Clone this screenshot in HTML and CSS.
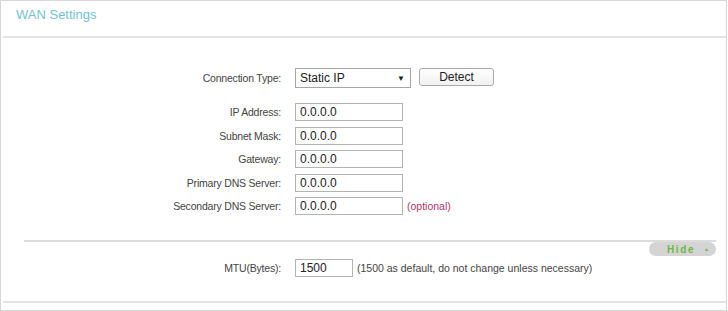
FILE: index.html
```html
<!DOCTYPE html>
<html lang="en">
<head>
    <meta charset="UTF-8">
    <title>WAN Settings</title>
    <link rel="stylesheet" href="styles.css">
</head>
<body>
    <div class="panel">
        <div class="panel-head">
            <h2>WAN Settings</h2>
        </div>

        <div class="panel-body">
            <div class="row row-type">
                <label for="conn-type">Connection Type:</label>
                <div class="field">
                    <div class="select-wrap">
                        <select id="conn-type">
                            <option>Static IP</option>
                            <option>Dynamic IP</option>
                            <option>PPPoE</option>
                        </select>
                        <span class="select-arrow">&#9660;</span>
                    </div>
                    <button class="btn-detect" type="button">Detect</button>
                </div>
            </div>

            <div class="ip-rows">
                <div class="row">
                    <label for="ip">IP Address:</label>
                    <div class="field"><input id="ip" type="text" value="0.0.0.0"></div>
                </div>
                <div class="row">
                    <label for="mask">Subnet Mask:</label>
                    <div class="field"><input id="mask" type="text" value="0.0.0.0"></div>
                </div>
                <div class="row">
                    <label for="gw">Gateway:</label>
                    <div class="field"><input id="gw" type="text" value="0.0.0.0"></div>
                </div>
                <div class="row">
                    <label for="dns1">Primary DNS Server:</label>
                    <div class="field"><input id="dns1" type="text" value="0.0.0.0"></div>
                </div>
                <div class="row">
                    <label for="dns2">Secondary DNS Server:</label>
                    <div class="field">
                        <input id="dns2" type="text" value="0.0.0.0">
                        <span class="optional">(optional)</span>
                    </div>
                </div>
            </div>

            <div class="adv-bar">
                <button class="btn-hide" type="button"><span>Hide</span><span class="hide-arrow">&#9650;</span></button>
            </div>

            <div class="row row-mtu">
                <label for="mtu">MTU(Bytes):</label>
                <div class="field">
                    <input id="mtu" class="input-short" type="text" value="1500">
                    <span class="hint">(1500 as default, do not change unless necessary)</span>
                </div>
            </div>
        </div>
    </div>
</body>
</html>
```

FILE: styles.css
```css
* {
    box-sizing: border-box;
}

body {
    margin: 0;
    font-family: "Liberation Sans", Arial, sans-serif;
    font-size: 10.5px;
    color: #444;
    background: #fff;
}

.panel {
    width: 727px;
    height: 311px;
    border: 1px solid #d6d6d6;
}

.panel-head {
    height: 37px;
    margin-left: 2px;
    border-bottom: 2px solid #e4e4e4;
}

.panel-head h2 {
    margin: 0;
    padding: 6px 0 0 13px;
    font-size: 13px;
    font-weight: normal;
    color: #72c3d2;
}

.panel-body {
    margin-left: 2px;
    padding-top: 30px;
    height: 265px;
    border-bottom: 2px solid #e4e4e4;
}

.row {
    display: grid;
    grid-template-columns: 278px auto;
    column-gap: 14px;
    align-items: center;
}

.row label {
    text-align: right;
    color: #444;
    letter-spacing: -0.2px;
}

.field {
    display: flex;
    align-items: center;
    gap: 4px;
}

.row-type {
    height: 20px;
    margin-bottom: 15px;
}

.row-type .field {
    gap: 8px;
}

.select-wrap {
    position: relative;
    width: 116px;
    height: 20px;
}

.select-wrap select {
    appearance: none;
    -webkit-appearance: none;
    width: 100%;
    height: 100%;
    padding: 0 0 0 4px;
    border: 1px solid #a6a6a6;
    border-radius: 0;
    background: #fff;
    font-family: "Liberation Sans", Arial, sans-serif;
    font-size: 12px;
    color: #222;
}

.select-arrow {
    position: absolute;
    right: 6px;
    top: 6px;
    font-size: 8px;
    color: #222;
    pointer-events: none;
}

.btn-detect {
    width: 75px;
    height: 18px;
    margin-top: -3px;
    padding: 0;
    border: 1px solid #a9a9a9;
    border-radius: 3px;
    background: linear-gradient(#fff, #f1f1f1);
    font-family: "Liberation Sans", Arial, sans-serif;
    font-size: 12px;
    color: #222;
}

.ip-rows {
    display: flex;
    flex-direction: column;
    gap: 5.5px;
}

input[type="text"] {
    width: 108px;
    height: 18px;
    padding: 0 0 0 4px;
    border: 1px solid #b3b3b3;
    font-family: "Liberation Sans", Arial, sans-serif;
    font-size: 12px;
    color: #222;
}

.input-short {
    width: 58px !important;
}

.optional {
    color: #b1346f;
}

.hint {
    color: #444;
}

.adv-bar {
    display: flex;
    justify-content: flex-end;
    margin: 25px 10px 0 21px;
    border-top: 2px solid #dcdcdc;
}

.btn-hide {
    display: flex;
    align-items: center;
    width: 67px;
    height: 14px;
    padding: 0 0 0 18px;
    border: none;
    border-radius: 7px;
    background: #d4d4d4;
    font-family: "Liberation Sans", Arial, sans-serif;
    font-size: 10px;
    font-weight: bold;
    letter-spacing: 1.6px;
    color: #6cb93c;
    white-space: nowrap;
}

.hide-arrow {
    margin-left: 9px;
    font-size: 5px;
    letter-spacing: 0;
}

.row-mtu {
    height: 18px;
    margin-top: 3px;
}
```
